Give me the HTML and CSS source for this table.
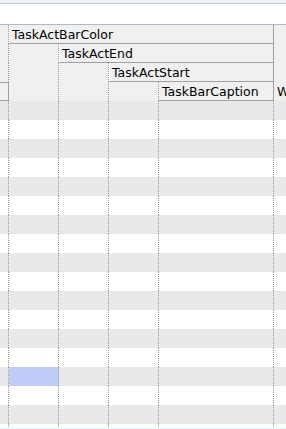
FILE: index.html
```html
<!DOCTYPE html>
<html lang="en">
<head>
  <meta charset="UTF-8">
  <meta name="viewport" content="width=device-width, initial-scale=1.0">
  <title>Task grid</title>
  <link rel="stylesheet" href="styles.css">
</head>
<body>
  <div class="toolbar"></div>

  <!-- Stepped column header -->
  <div class="head">
    <div class="hcell dot c0 r1"></div>
    <div class="hcell dot c0 r2"></div>
    <div class="hcell dot c0 r3"></div>
    <div class="hcell rowhead"></div>

    <div class="hcell title span1">TaskActBarColor</div>
    <div class="hcell dot c1 r2"></div>
    <div class="hcell dot c1 r3"></div>
    <div class="hcell dot c1 r4"></div>

    <div class="hcell title span2">TaskActEnd</div>
    <div class="hcell dot c2 r3"></div>
    <div class="hcell dot c2 r4"></div>

    <div class="hcell title span3">TaskActStart</div>
    <div class="hcell dot c3 r4"></div>

    <div class="hcell title span4">TaskBarCaption</div>

    <div class="hcell last">W</div>
  </div>

  <div class="rows" id="rows"></div>
  <div class="hscroll"></div>

  <script>
    const rows = document.getElementById('rows');
    // 18 rows, 6 cells each; row 14 has the selected cell in the first data column
    for (let i = 0; i < 18; i++) {
      const row = document.createElement('div');
      row.className = i % 2 === 0 ? 'row odd' : 'row';
      for (let j = 0; j < 6; j++) {
        const cell = document.createElement('div');
        cell.className = 'cell';
        if (i === 14 && j === 1) cell.className += ' selected';
        row.appendChild(cell);
      }
      rows.appendChild(row);
    }
  </script>
</body>
</html>
```

FILE: styles.css
```css
* {
  box-sizing: border-box;
}

body {
  margin: 0;
  font-family: "DejaVu Sans", Verdana, sans-serif;
  font-size: 12.5px;
  color: #000;
  background-color: #fff;
  overflow: hidden;
  height: 429px;
}

.toolbar {
  height: 25px;
  border-top: 3px solid #f3f3f3;
  background-color: #fff;
  position: relative;
}

.toolbar::before {
  content: "";
  display: block;
  height: 1px;
  background-color: #bccbdc;
}

.toolbar::after {
  content: "";
  position: absolute;
  left: 0;
  right: 0;
  bottom: 0;
  height: 1px;
  background-color: #b0bac6;
}

.head,
.row {
  display: grid;
  grid-template-columns: 9px 50px 50px 50px 115px 1fr;
}

.head {
  grid-template-rows: repeat(4, 19px);
  background-color: #f0f0f0;
}

.hcell {
  min-width: 0;
}

.dot {
  border-right: 1px dotted #9c9c9c;
}

.c0 { grid-column: 1; }
.c1 { grid-column: 2; }
.c2 { grid-column: 3; }
.c3 { grid-column: 4; }
.r1 { grid-row: 1; }
.r2 { grid-row: 2; }
.r3 { grid-row: 3; }
.r4 { grid-row: 4; }

.rowhead {
  grid-column: 1;
  grid-row: 4;
  border-top: 1px solid #a0a0a0;
  border-bottom: 1px solid #a0a0a0;
  border-right: 1px solid #a0a0a0;
}

.title {
  border-left: 1px solid #fff;
  border-right: 1px solid #a0a0a0;
  border-bottom: 1px solid #a0a0a0;
  padding-left: 2px;
  padding-top: 1px;
  line-height: 17px;
  white-space: nowrap;
  overflow: hidden;
}

.span1 { grid-column: 2 / 6; grid-row: 1; }
.span2 { grid-column: 3 / 6; grid-row: 2; }
.span3 { grid-column: 4 / 6; grid-row: 3; }
.span4 { grid-column: 5 / 6; grid-row: 4; border-left: none; padding-left: 3px; }

.last {
  grid-column: 6;
  grid-row: 1 / 5;
  display: flex;
  align-items: flex-end;
  padding-left: 3px;
  padding-bottom: 1px;
  line-height: 17px;
  white-space: nowrap;
}

.rows {
  height: 327px;
  overflow: hidden;
}

.row {
  height: 19px;
}

.row.odd {
  background-color: #e9e9e9;
}

.cell {
  border-right: 1px dotted #9c9c9c;
}

.cell:last-child {
  border-right: none;
}

.selected {
  background-color: #c1cbf8;
}

.hscroll {
  height: 2px;
  background-color: #fff;
  border-top: 1px solid #e6f3fc;
}
```
